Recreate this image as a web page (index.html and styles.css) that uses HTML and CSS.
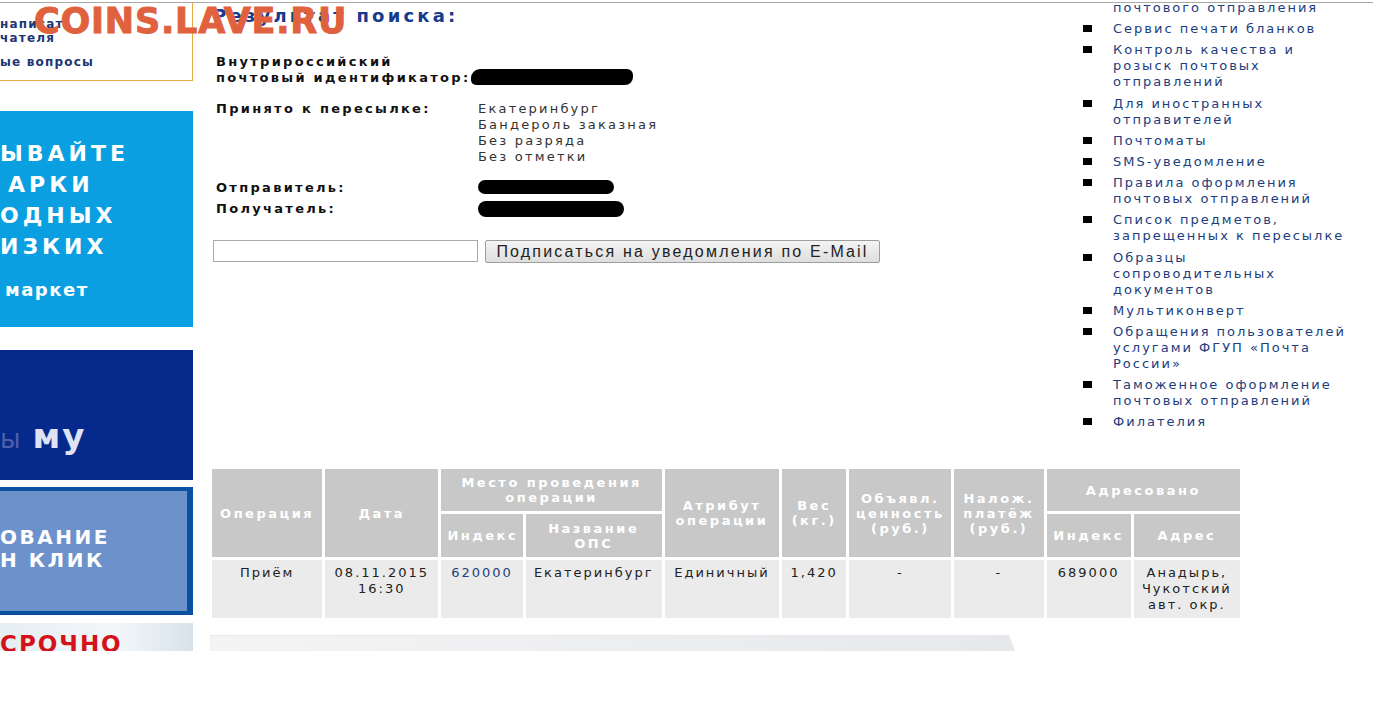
FILE: index.html
```html
<!DOCTYPE html>
<html lang="ru">
<head>
    <meta charset="UTF-8">
    <title>Результат поиска</title>
    <link rel="stylesheet" href="styles.css">
</head>
<body>
    <div class="page">
        <div class="watermark">COINS.LAVE.RU</div>

        <aside class="left">
            <div class="helpbox">
                <a href="#">написать<br>чателя</a>
                <a href="#">ые вопросы</a>
            </div>
            <div class="banner banner-sky">
                <span class="l1">ЫВАЙТЕ</span>
                <span class="l2">АРКИ</span>
                <span class="l3">ОДНЫХ</span>
                <span class="l4">ИЗКИХ</span>
                <span class="small">маркет</span>
            </div>
            <div class="banner banner-navy">
                <span class="faded">ы</span><span class="big">му</span>
            </div>
            <div class="banner banner-frame">
                <div class="inner">ОВАНИЕ<br>Н КЛИК</div>
            </div>
            <div class="banner banner-urgent">СРОЧНО</div>
        </aside>

        <main class="main">
            <div class="top">
                <section class="result">
                    <h1>Результат поиска:</h1>
                    <div class="field field-id">
                        <div class="label">Внутрироссийский<br>почтовый идентификатор:</div>
                        <div class="value"><span class="blot blot-id"></span></div>
                    </div>
                    <div class="field">
                        <div class="label">Принято к пересылке:</div>
                        <div class="value">Екатеринбург<br>Бандероль заказная<br>Без разряда<br>Без отметки</div>
                    </div>
                    <div class="field field-sender">
                        <div class="label">Отправитель:</div>
                        <div class="value"><span class="blot blot-sender"></span></div>
                    </div>
                    <div class="field field-receiver">
                        <div class="label">Получатель:</div>
                        <div class="value"><span class="blot blot-receiver"></span></div>
                    </div>
                    <form class="subscribe">
                        <input type="text">
                        <button type="button">Подписаться на уведомления по E-Mail</button>
                    </form>
                </section>

                <nav class="side-menu">
                    <ul>
                        <li><a href="#">Отслеживание<br>почтового отправления</a></li>
                        <li><a href="#">Сервис печати бланков</a></li>
                        <li><a href="#">Контроль качества и розыск почтовых отправлений</a></li>
                        <li><a href="#">Для иностранных отправителей</a></li>
                        <li><a href="#">Почтоматы</a></li>
                        <li><a href="#">SMS-уведомление</a></li>
                        <li><a href="#">Правила оформления почтовых отправлений</a></li>
                        <li><a href="#">Список предметов, запрещенных к пересылке</a></li>
                        <li><a href="#">Образцы сопроводительных документов</a></li>
                        <li><a href="#">Мультиконверт</a></li>
                        <li><a href="#">Обращения пользователей услугами ФГУП «Почта России»</a></li>
                        <li><a href="#">Таможенное оформление почтовых отправлений</a></li>
                        <li><a href="#">Филателия</a></li>
                    </ul>
                </nav>
            </div>

            <table class="ops">
                <colgroup>
                    <col style="width: 110px">
                    <col style="width: 113px">
                    <col style="width: 81px">
                    <col style="width: 136px">
                    <col style="width: 114px">
                    <col style="width: 64px">
                    <col style="width: 102px">
                    <col style="width: 89px">
                    <col style="width: 84px">
                    <col style="width: 106px">
                </colgroup>
                <tr class="head1">
                    <th rowspan="2">Операция</th>
                    <th rowspan="2">Дата</th>
                    <th colspan="2">Место проведения операции</th>
                    <th rowspan="2">Атрибут операции</th>
                    <th rowspan="2">Вес (кг.)</th>
                    <th rowspan="2">Объявл. ценность (руб.)</th>
                    <th rowspan="2">Налож. платёж (руб.)</th>
                    <th colspan="2">Адресовано</th>
                </tr>
                <tr class="head2">
                    <th>Индекс</th>
                    <th>Название ОПС</th>
                    <th>Индекс</th>
                    <th>Адрес</th>
                </tr>
                <tr class="row">
                    <td>Приём</td>
                    <td>08.11.2015 16:30</td>
                    <td><a href="#">620000</a></td>
                    <td>Екатеринбург</td>
                    <td>Единичный</td>
                    <td>1,420</td>
                    <td>-</td>
                    <td>-</td>
                    <td>689000</td>
                    <td>Анадырь, Чукотский авт. окр.</td>
                </tr>
            </table>

            <div class="footer-bar"></div>
        </main>
    </div>
</body>
</html>
```

FILE: styles.css
```css
body {
    margin: 0;
    background: #fff;
    font-family: "DejaVu Sans", Verdana, sans-serif;
    font-size: 13px;
    color: #222;
}
a {
    text-decoration: none;
}
.page {
    position: relative;
    display: flex;
    width: 1373px;
    height: 648px;
    margin-top: 2px;
    border-top: 1px solid #a9a9a9;
    overflow: hidden;
}
.watermark {
    position: absolute;
    left: 34px;
    top: -2px;
    font-size: 35px;
    font-weight: bold;
    letter-spacing: 0.8px;
    color: #e0613d;
    -webkit-text-stroke: 1px #e0613d;
    z-index: 2;
}

/* left column */
.left {
    width: 193px;
    flex-shrink: 0;
    display: flex;
    flex-direction: column;
}
.left > div {
    flex-shrink: 0;
}
.helpbox {
    height: 78px;
    border-right: 1px solid #e6aa45;
    border-bottom: 1px solid #e6aa45;
    display: flex;
    flex-direction: column;
    padding-top: 14px;
    box-sizing: border-box;
}
.helpbox a {
    font-size: 12px;
    font-weight: bold;
    line-height: 14px;
    letter-spacing: 1.2px;
    color: #1b3674;
}
.helpbox a + a {
    margin-top: 10px;
}
.banner {
    width: 193px;
    color: #fff;
    font-weight: bold;
    box-sizing: border-box;
}
.banner-sky {
    margin-top: 30px;
    height: 216px;
    background: #0a9fe0;
    padding-top: 27px;
    display: flex;
    flex-direction: column;
    font-size: 22px;
    line-height: 31px;
    letter-spacing: 4px;
}
.banner-sky .l2 {
    padding-left: 8px;
}
.banner-sky .small {
    margin-top: 12px;
    padding-left: 5px;
    font-size: 18px;
    letter-spacing: 1.5px;
}
.banner-navy {
    margin-top: 23px;
    height: 130px;
    background: #062a8b;
    padding-top: 66px;
    font-size: 34px;
    line-height: 40px;
    letter-spacing: 2px;
}
.banner-navy .faded {
    color: #4e5fa8;
    font-weight: normal;
    font-size: 26px;
}
.banner-navy .big {
    color: #dfe2f4;
    margin-left: 10px;
}
.banner-frame {
    margin-top: 7px;
    height: 128px;
    background: #0b4f9f;
    padding: 4px 6px 4px 0;
}
.banner-frame .inner {
    height: 100%;
    background: #6d91ca;
    padding-top: 35px;
    box-sizing: border-box;
    font-size: 20px;
    line-height: 23px;
    letter-spacing: 2.5px;
}
.banner-urgent {
    margin-top: 8px;
    height: 40px;
    background: linear-gradient(90deg, #e5eef3, #f3f7f9 60%, #d7e3ea);
    padding-top: 8px;
    color: #d4121b;
    font-size: 23px;
    letter-spacing: 2px;
}

/* main column */
.main {
    margin-left: 20px;
    display: flex;
    flex-direction: column;
}
.top {
    display: flex;
}
.result {
    width: 870px;
}
.result h1 {
    margin: 2px 0 0;
    font-size: 18px;
    line-height: 22px;
    letter-spacing: 3.2px;
    color: #163a8c;
}
.field {
    display: flex;
    line-height: 16px;
    margin-top: 15px;
}
.field-id {
    margin-top: 27px;
}
.field-receiver {
    margin-top: 5px;
}
.label {
    width: 265px;
    padding-left: 3px;
    box-sizing: border-box;
    font-weight: bold;
    letter-spacing: 2.3px;
    color: #111;
}
.value {
    letter-spacing: 2.2px;
    color: #333;
}
.blot {
    display: block;
    background: #000;
    border-radius: 8px;
}
.blot-id {
    width: 162px;
    height: 16px;
    margin: 15px 0 0 -7px;
    border-radius: 9px 6px 8px 5px;
}
.blot-sender {
    width: 136px;
    height: 14px;
    margin-top: 0;
}
.blot-receiver {
    width: 146px;
    height: 16px;
    margin-top: 0;
}
.subscribe {
    margin-top: 23px;
    display: flex;
    gap: 7px;
}
.subscribe input {
    width: 265px;
    height: 22px;
    margin: 0;
    padding: 0;
    border: 1px solid #a9a9a9;
    box-sizing: border-box;
}
.subscribe button {
    width: 395px;
    height: 23px;
    margin: 0;
    padding: 0;
    border: 1px solid #9d9d9d;
    border-radius: 2px;
    background: linear-gradient(#f4f4f4, #dedede);
    font-family: "Liberation Sans", Arial, sans-serif;
    font-size: 16px;
    letter-spacing: 2.2px;
    color: #222;
}
.side-menu {
    width: 290px;
}
.side-menu ul {
    list-style: none;
    margin: -19px 0 0;
    padding: 0;
}
.side-menu li {
    display: flex;
    line-height: 16px;
    margin-bottom: 5.2px;
}
.side-menu li::before {
    content: "";
    flex-shrink: 0;
    width: 9px;
    height: 7px;
    margin: 4px 21px 0 0;
    background: #000;
}
.side-menu a {
    width: 240px;
    letter-spacing: 2px;
    color: #213d7d;
}

/* operations table */
.ops {
    margin: 31px 0 0 -4px;
    border-collapse: separate;
    border-spacing: 3px;
    table-layout: fixed;
    width: 1034px;
}
.ops th {
    background: #c8c8c8;
    color: #fff;
    font-weight: bold;
    line-height: 15px;
    letter-spacing: 2.5px;
    padding: 0 6px;
}
.ops .head1 {
    height: 42px;
}
.ops .head2 {
    height: 43px;
}
.ops td {
    height: 58px;
    box-sizing: border-box;
    background: #ebebeb;
    vertical-align: top;
    text-align: center;
    line-height: 16px;
    letter-spacing: 2px;
    padding: 5px 2px 0;
    color: #222;
}
.ops td a {
    color: #1e3f7c;
}
.footer-bar {
    margin: 14px 0 0 -3px;
    width: 805px;
    height: 16px;
    border-top: 1px solid #d4d4d4;
    background: linear-gradient(90deg, #f4f4f4, #e6e8ec);
    clip-path: polygon(0 0, 99.3% 0, 100% 100%, 0 100%);
}
```
